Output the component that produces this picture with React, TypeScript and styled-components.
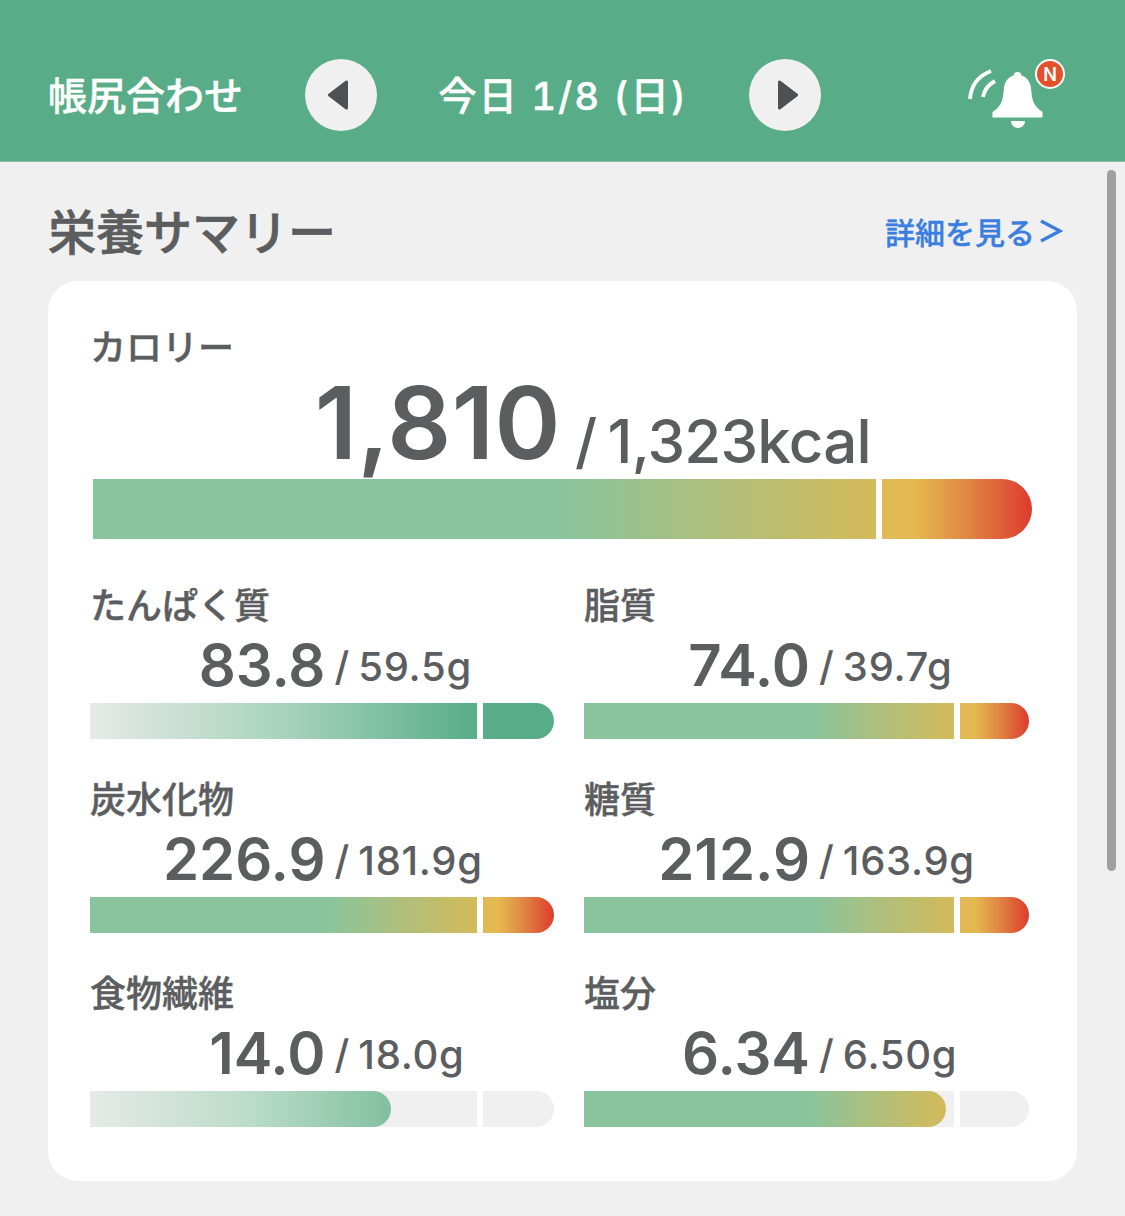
import styled, { createGlobalStyle } from 'styled-components'

const JP = `'Noto Sans CJK JP', 'Noto Sans', sans-serif`
const NUM = `Inter, 'Noto Sans CJK JP', sans-serif`

const GREEN_TO_RED = 'linear-gradient(90deg, #e0b958 0%, #e5b84f 22%, #e08a45 55%, #dd3b2e 100%)'

interface Nutrient {
	name: string
	value: string
	target: string
	first: string
	second: string
	fill?: number
	fillBg?: string
}

const warm = (from: number) =>
	`linear-gradient(90deg, #8ac49c 0%, #8ac49c ${from}%, #d4ba5a 100%)`

const nutrients: Nutrient[] = [
	{
		name: 'たんぱく質',
		value: '83.8',
		target: '59.5g',
		first: 'linear-gradient(90deg, #e6eae7 0%, #a8d3bc 50%, #58ad88 100%)',
		second: '#58ad88',
	},
	{
		name: '脂質',
		value: '74.0',
		target: '39.7g',
		first: warm(62),
		second: GREEN_TO_RED,
	},
	{
		name: '炭水化物',
		value: '226.9',
		target: '181.9g',
		first: warm(62),
		second: GREEN_TO_RED,
	},
	{
		name: '糖質',
		value: '212.9',
		target: '163.9g',
		first: warm(62),
		second: GREEN_TO_RED,
	},
	{
		name: '食物繊維',
		value: '14.0',
		target: '18.0g',
		first: '#f0f0f0',
		second: '#f0f0f0',
		fill: 301,
		fillBg: 'linear-gradient(90deg, #e6eae7 0%, #b9dbc8 55%, #82c09f 100%)',
	},
	{
		name: '塩分',
		value: '6.34',
		target: '6.50g',
		first: '#f0f0f0',
		second: '#f0f0f0',
		fill: 362,
		fillBg: 'linear-gradient(90deg, #8ac49c 0%, #8ac49c 62%, #d4ba5a 100%)',
	},
]

export default function App() {
	return (
		<Page>
			<GlobalStyle />
			<Header>
				<HeaderTitle>帳尻合わせ</HeaderTitle>
				<RoundButton>
					<svg width="26" height="30" viewBox="0 0 26 30">
						<path
							d="M18.5 2 L1.5 15 L18.5 28 Z"
							fill="#4f5052"
							stroke="#4f5052"
							strokeWidth="3"
							strokeLinejoin="round"
						/>
					</svg>
				</RoundButton>
				<DateLabel>今日 1/8 (日)</DateLabel>
				<RoundButton>
					<svg width="26" height="30" viewBox="0 0 26 30">
						<path
							d="M7.5 2 L24.5 15 L7.5 28 Z"
							fill="#4f5052"
							stroke="#4f5052"
							strokeWidth="3"
							strokeLinejoin="round"
						/>
					</svg>
				</RoundButton>
				<BellWrap>
					<svg width="85" height="65" viewBox="0 0 85 65">
						<path
							d="M52.5 7c-2.4 0-4 1.6-4 3.6-5.6 1.6-9 6.6-9.6 13-.8 9-1 17-11.4 23.4v5.5h50v-5.5c-10.4-6.4-10.6-14.4-11.4-23.4-.6-6.4-4-11.4-9.6-13 0-2-1.6-3.6-4-3.6z"
							fill="#fff"
						/>
						<path d="M46 56h14a7 7 0 0 1-14 0z" fill="#fff" />
						<path
							d="M5 34C6 21 13 11 26 6"
							fill="none"
							stroke="#fff"
							strokeWidth="3.8"
						/>
						<path
							d="M18 32C19 25 23 20 30 16"
							fill="none"
							stroke="#fff"
							strokeWidth="3.8"
						/>
					</svg>
					<Badge>N</Badge>
				</BellWrap>
			</Header>
			<Content>
				<SectionHead>
					<SectionTitle>栄養サマリー</SectionTitle>
					<DetailLink>
						詳細を見る
						<svg width="24" height="26" viewBox="0 0 24 26">
							<path
								d="M2 3 L21 13 L2 23"
								fill="none"
								stroke="#3a7fe0"
								strokeWidth="3.4"
							/>
						</svg>
					</DetailLink>
				</SectionHead>
				<Card>
					<CalorieLabel>カロリー</CalorieLabel>
					<CalorieValues>
						<CalorieNumber>1,810</CalorieNumber>
						<CalorieTarget>/ 1,323kcal</CalorieTarget>
					</CalorieValues>
					<CalorieBar>
						<CalorieFirst />
						<CalorieSecond />
					</CalorieBar>
					<NutrientGrid>
						{nutrients.map((n) => (
							<NutrientCell key={n.name}>
								<NutrientLabel>{n.name}</NutrientLabel>
								<NutrientValues>
									<NutrientNumber>{n.value}</NutrientNumber>
									<NutrientTarget>/ {n.target}</NutrientTarget>
								</NutrientValues>
								<NutrientBar>
									<FirstSegment $bg={n.first}>
										{n.fill && (
											<PartialFill
												$bg={n.fillBg as string}
												style={{ width: n.fill }}
											/>
										)}
									</FirstSegment>
									<SecondSegment $bg={n.second} />
								</NutrientBar>
							</NutrientCell>
						))}
					</NutrientGrid>
				</Card>
			</Content>
			<ScrollThumb />
		</Page>
	)
}

const GlobalStyle = createGlobalStyle`
	html, body {
		margin: 0;
		padding: 0;
		background: #f0f0f0;
	}
	* {
		box-sizing: border-box;
	}
`
const Page = styled.div`
	position: relative;
	width: 1125px;
	height: 1216px;
	overflow: hidden;
	background: #f0f0f0;
	font-family: ${JP};
	color: #5b5d5f;
`
const Header = styled.header`
	display: flex;
	align-items: center;
	height: 162px;
	padding: 28px 60px 0 48px;
	background: #58ad88;
	border-bottom: 1px solid #9ab8a8;
`
const HeaderTitle = styled.h1`
	margin: 0 0 4px;
	width: 257px;
	font-size: 39px;
	font-weight: 500;
	-webkit-text-stroke: 0.4px #fff;
	color: #fff;
`
const RoundButton = styled.div`
	display: flex;
	align-items: center;
	justify-content: center;
	width: 72px;
	height: 72px;
	border-radius: 50%;
	background: #f0f0f0;
`
const DateLabel = styled.div`
	width: 372px;
	margin-bottom: 4px;
	text-align: center;
	font-family: ${NUM};
	font-feature-settings: 'tnum';
	font-size: 38.4px;
	font-weight: 500;
	letter-spacing: 2px;
	-webkit-text-stroke: 0.4px #fff;
	color: #fff;
`
const BellWrap = styled.div`
	position: relative;
	display: flex;
	margin-left: auto;
	margin-top: 6px;
	margin-right: 15px;
`
const Badge = styled.span`
	position: absolute;
	top: -6px;
	right: -15px;
	display: flex;
	align-items: center;
	justify-content: center;
	width: 30px;
	height: 30px;
	border-radius: 50%;
	border: 2.5px solid #fff;
	background: #e2512a;
	color: #fff;
	font-family: Inter, sans-serif;
	font-size: 18px;
	font-weight: 600;
`
const Content = styled.main`
	padding: 0 48px;
`
const SectionHead = styled.div`
	display: flex;
	align-items: center;
	justify-content: space-between;
	height: 119px;
	padding: 14px 14px 0 0;
`
const SectionTitle = styled.h2`
	margin: 0;
	font-size: 48px;
	font-weight: 500;
	-webkit-text-stroke: 0.7px #5b5d5f;
	color: #5b5d5f;
`
const DetailLink = styled.a`
	display: flex;
	align-items: center;
	gap: 4px;
	margin-top: 4px;
	font-size: 30px;
	font-weight: 500;
	-webkit-text-stroke: 0.4px #3a7fe0;
	color: #3a7fe0;
`
const Card = styled.section`
	height: 900px;
	width: 1029px;
	padding: 43px 45px 0 42px;
	border-radius: 30px;
	background: #fff;
`
const CalorieLabel = styled.div`
	height: 44px;
	font-size: 36px;
	font-weight: 500;
	line-height: 42px;
	-webkit-text-stroke: 0.4px #5b5d5f;
`
const CalorieValues = styled.div`
	display: grid;
	grid-template-columns: 1fr 1fr;
	column-gap: 14px;
	align-items: start;
	height: 111px;
	padding-left: 14px;
`
const CalorieNumber = styled.span`
	justify-self: end;
	font-family: ${NUM};
	font-size: 100px;
	font-weight: 600;
	line-height: 110px;
	letter-spacing: 0.5px;
`
const CalorieTarget = styled.span`
	margin-top: 35px;
	font-family: ${NUM};
	font-size: 60px;
	font-weight: 500;
	line-height: 76px;
	letter-spacing: -0.8px;
	word-spacing: -4px;
`
const CalorieBar = styled.div`
	display: flex;
	gap: 6px;
	height: 60px;
	margin-left: 3px;
`
const CalorieFirst = styled.div`
	width: 783px;
	background: linear-gradient(90deg, #8ac49c 0%, #8ac49c 60%, #d4ba5a 100%);
`
const CalorieSecond = styled.div`
	flex: 1;
	background: ${GREEN_TO_RED};
	border-radius: 0 30px 30px 0;
`
const NutrientGrid = styled.div`
	display: grid;
	grid-template-columns: 464px 445px;
	column-gap: 30px;
	margin-top: 44px;
`
const NutrientCell = styled.div`
	height: 194px;
`
const NutrientLabel = styled.div`
	height: 44px;
	font-size: 36px;
	font-weight: 500;
	line-height: 40px;
	-webkit-text-stroke: 0.4px #5b5d5f;
`
const NutrientValues = styled.div`
	display: grid;
	grid-template-columns: 1fr 1fr;
	column-gap: 9px;
	align-items: start;
	height: 76px;
	padding-left: 16px;
`
const NutrientNumber = styled.span`
	justify-self: end;
	font-family: ${NUM};
	font-size: 58px;
	font-weight: 600;
	line-height: 76px;
`
const NutrientTarget = styled.span`
	margin-top: 10px;
	font-family: ${NUM};
	font-size: 40px;
	font-weight: 500;
	line-height: 60px;
	letter-spacing: 0.7px;
	word-spacing: -3px;
`
const NutrientBar = styled.div`
	display: flex;
	gap: 6px;
	height: 36px;
`
const FirstSegment = styled.div<{ $bg: string }>`
	flex: 0 0 auto;
	width: calc(89.5% - 28.3px);
	background: ${(p) => p.$bg};
`
const SecondSegment = styled.div<{ $bg: string }>`
	flex: 1;
	background: ${(p) => p.$bg};
	border-radius: 0 18px 18px 0;
`
const PartialFill = styled.div<{ $bg: string }>`
	height: 100%;
	background: ${(p) => p.$bg};
	border-radius: 0 18px 18px 0;
`
const ScrollThumb = styled.div`
	position: absolute;
	top: 170px;
	left: 1107px;
	width: 9px;
	height: 701px;
	border-radius: 5px;
	background: #a0a0a0;
`
